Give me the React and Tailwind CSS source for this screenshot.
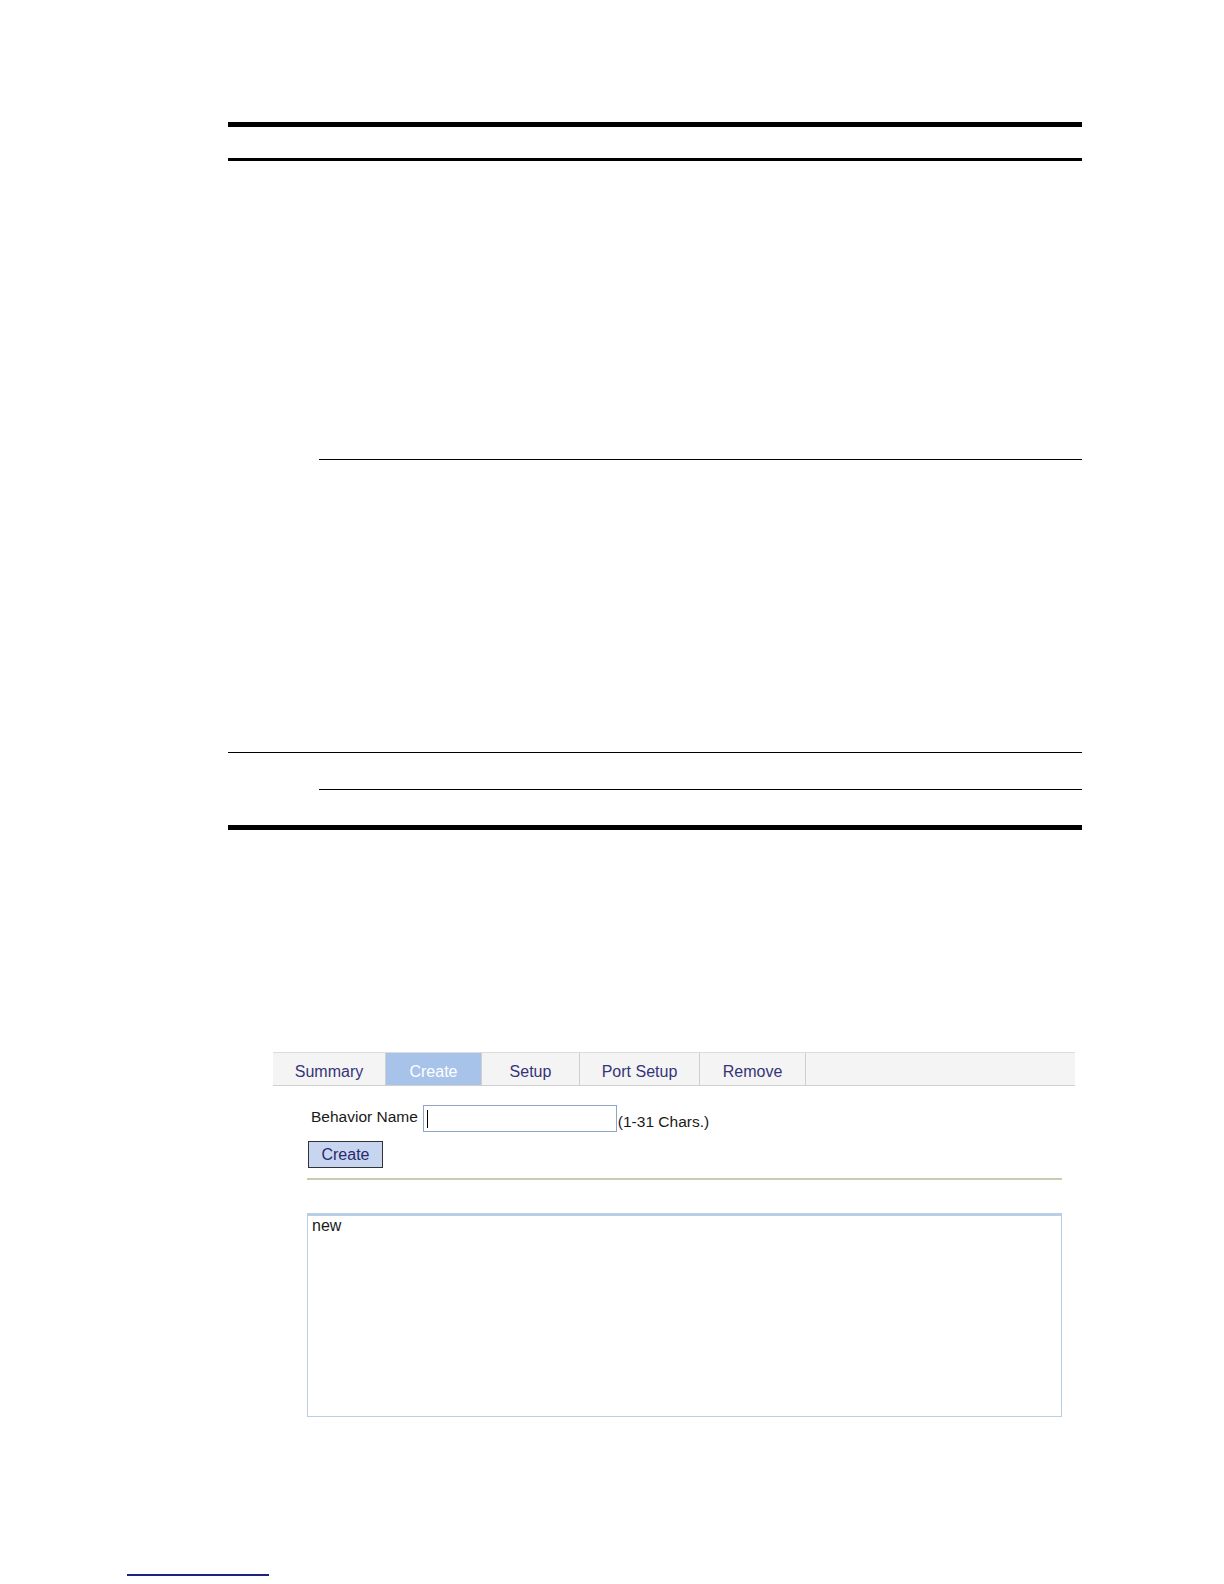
export default function App() {
  const tabs = [
    { label: "Summary", w: "w-[113px]" },
    { label: "Create", w: "w-[96px]", active: true },
    { label: "Setup", w: "w-[98px]" },
    { label: "Port Setup", w: "w-[120px]" },
    { label: "Remove", w: "w-[106px]" },
  ];
  return (
    <div className="relative w-[1224px] h-[1584px] bg-white font-['Liberation_Sans',Arial,sans-serif]">
      {/* document rules */}
      <div className="pt-[122px] ml-[228px] w-[854px]">
        <div className="h-[5px] bg-black" />
        <div className="h-[31px]" />
        <div className="h-[3px] bg-black" />
        <div className="h-[298px]" />
        <div className="ml-[91px] h-[1px] bg-black" />
        <div className="h-[292px]" />
        <div className="h-[1px] bg-black" />
        <div className="h-[36px]" />
        <div className="ml-[91px] h-[1px] bg-black" />
        <div className="h-[35px]" />
        <div className="h-[5px] bg-black" />
      </div>

      {/* UI screenshot */}
      <div className="mt-[222px] ml-[273px] w-[802px]">
        <div className="flex h-[34px] bg-[#f4f4f4] border-t border-[#dcdcdc] border-b border-b-[#d0d0d0]">
          {tabs.map((t) => (
            <div
              key={t.label}
              className={`${t.w} flex items-end justify-center pb-[1px] text-[16px] border-r border-[#cfcfcf] ${
                t.active ? "bg-[#a8c3ea] text-white" : "text-[#34347a]"
              }`}
            >
              {t.label}
            </div>
          ))}
        </div>
        <div className="pl-[35px] pt-[19px]">
          <div className="flex items-center h-[27px] text-[15.5px] text-[#1a1a1a] pl-[3px]">
            <span className="mr-[5px] mb-[3px]">Behavior Name</span>
            <div className="w-[194px] h-[27px] border border-[#8ea6c4] bg-white flex items-center pl-[3px]">
              <div className="w-[1px] h-[18px] bg-black" />
            </div>
            <span className="ml-[1px] mt-[6px]">(1-31 Chars.)</span>
          </div>
          <div className="mt-[9px] w-[75px] h-[27px] bg-[#c7d5f1] border border-[#333] flex items-center justify-center text-[16px] text-[#2a2a6a]">
            Create
          </div>
        </div>
        <div className="ml-[34px] mt-[10px] w-[755px] h-[2px] bg-[#cbcbb4]" />
        <div className="ml-[34px] mt-[33px] w-[755px] h-[204px] border border-[#b9cfe6] border-t-[3px]">
          <div className="pl-[4px] text-[16px] leading-[20px] text-[#1a1a1a]">new</div>
        </div>
      </div>

      <div className="absolute left-[127px] top-[1574px] w-[142px] h-[2px] bg-[#1a237e]" />
    </div>
  );
}
